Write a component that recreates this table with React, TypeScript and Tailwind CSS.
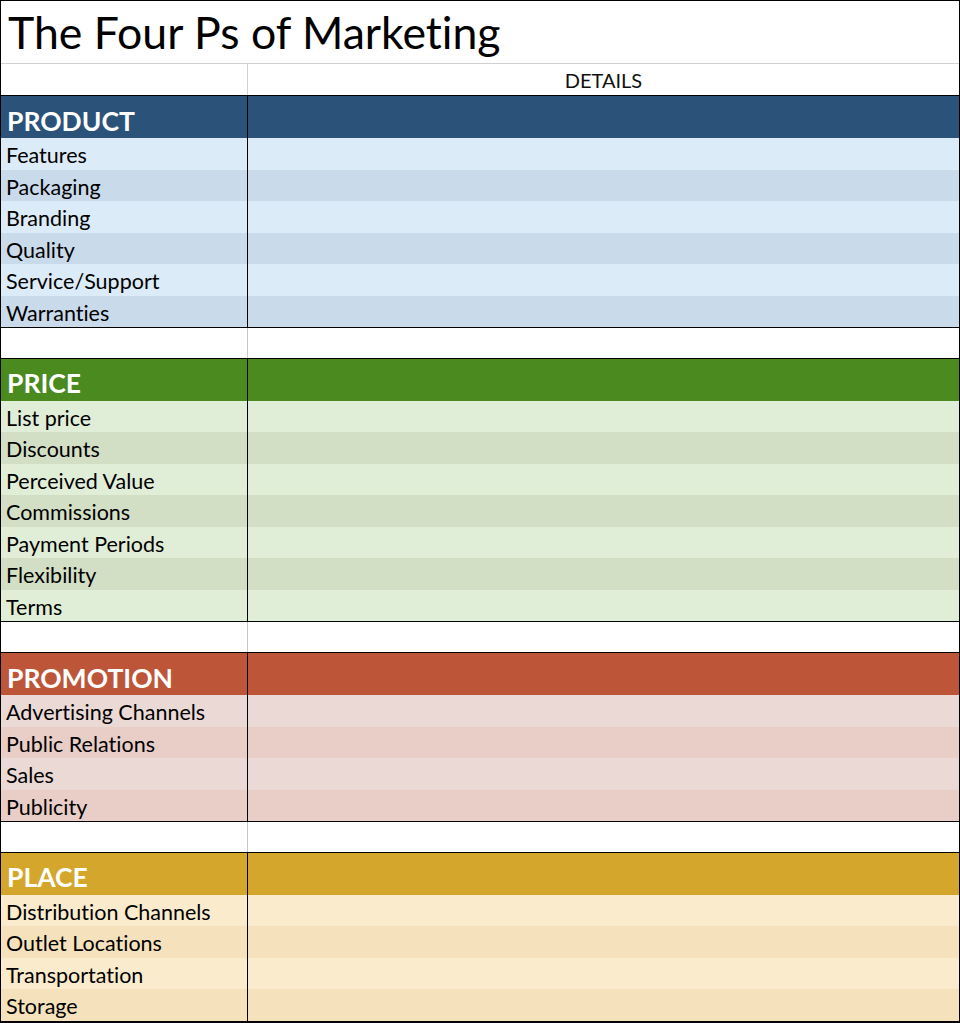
import React from 'react';

type Section = {
  title: string;
  header: string;
  even: string;
  odd: string;
  rows: string[];
};

const sections: Section[] = [
  {
    title: 'PRODUCT',
    header: 'bg-[#2b5279]',
    even: 'bg-[#dcebf8]',
    odd: 'bg-[#c9daea]',
    rows: ['Features', 'Packaging', 'Branding', 'Quality', 'Service/Support', 'Warranties'],
  },
  {
    title: 'PRICE',
    header: 'bg-[#4a8a1f]',
    even: 'bg-[#e0eed8]',
    odd: 'bg-[#d2dfc5]',
    rows: ['List price', 'Discounts', 'Perceived Value', 'Commissions', 'Payment Periods', 'Flexibility', 'Terms'],
  },
  {
    title: 'PROMOTION',
    header: 'bg-[#bd5539]',
    even: 'bg-[#ebd9d6]',
    odd: 'bg-[#e9cdc7]',
    rows: ['Advertising Channels', 'Public Relations', 'Sales', 'Publicity'],
  },
  {
    title: 'PLACE',
    header: 'bg-[#d4a62b]',
    even: 'bg-[#fbebcd]',
    odd: 'bg-[#f5e2bc]',
    rows: ['Distribution Channels', 'Outlet Locations', 'Transportation', 'Storage'],
  },
];

function SectionBlock({ section }: { section: Section }) {
  return (
    <div className="border-b border-black">
      {/* Section header */}
      <div className={`grid grid-cols-[247px_1fr] h-[42px] ${section.header}`}>
        <div className="border-r border-black flex items-end pl-[6px] pb-[4px]">
          <span className="text-white font-bold text-[26.5px] leading-none">{section.title}</span>
        </div>
        <div />
      </div>
      {/* Rows */}
      {section.rows.map((row, i) => (
        <div
          key={row}
          className={`grid grid-cols-[247px_1fr] h-[31.5px] ${i % 2 === 0 ? section.even : section.odd}`}
        >
          <div className="border-r border-black flex items-end pl-[5px] pb-[3px]">
            <span className="text-[21.5px] leading-none text-black">{row}</span>
          </div>
          <div />
        </div>
      ))}
    </div>
  );
}

function BlankRow() {
  return (
    <div className="grid grid-cols-[247px_1fr] h-[31px] bg-white border-b border-black">
      <div className="border-r border-[#c8c8c8]" />
      <div />
    </div>
  );
}

export default function App() {
  return (
    <div
      className="w-[960px] h-[1023px] bg-white border border-black overflow-hidden flex flex-col [font-variant-ligatures:none]"
      style={{ fontFamily: 'Lato, "Liberation Sans", sans-serif' }}
    >
      {/* Title row */}
      <div className="h-[63px] shrink-0 border-b border-[#d0d0d0] flex items-end pl-[7px] pb-[8px]">
        <h1 className="text-[44.6px] leading-none text-black">The Four Ps of Marketing</h1>
      </div>

      {/* Column header row */}
      <div className="grid grid-cols-[247px_1fr] h-[32px] shrink-0 border-b border-black">
        <div className="border-r border-[#d0d0d0]" />
        <div className="flex items-end justify-center pb-[5px]">
          <span className="text-[20px] leading-none text-[#111]">DETAILS</span>
        </div>
      </div>

      <SectionBlock section={sections[0]} />
      <BlankRow />
      <SectionBlock section={sections[1]} />
      <BlankRow />
      <SectionBlock section={sections[2]} />
      <BlankRow />
      <SectionBlock section={sections[3]} />
    </div>
  );
}
